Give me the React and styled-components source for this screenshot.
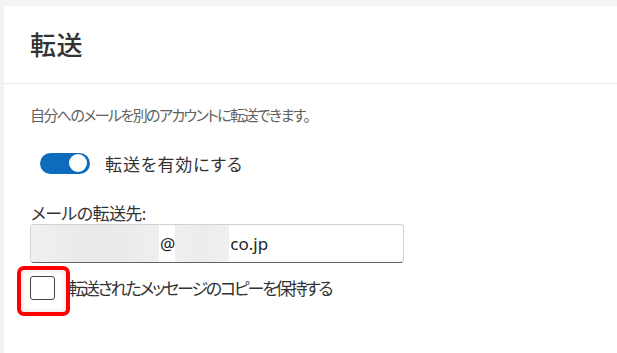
import React from 'react'
import styled, { createGlobalStyle } from 'styled-components'

const GlobalStyle = createGlobalStyle`
    body {
        margin: 0;
        background: #f3f3f3;
        font-family: "Noto Sans", "Noto Sans CJK JP", sans-serif;
        font-feature-settings: "palt";
        color: #242424;
    }
`

function App() {
    return (
        <>
            <GlobalStyle />
            <Panel>
                <Header>
                    <h1>転送</h1>
                </Header>
                <Body>
                    <Description>自分へのメールを別のアカウントに転送できます。</Description>
                    <ToggleRow>
                        <Toggle $on>
                            <span />
                        </Toggle>
                        <Label $spacing={0.9} $drop={3}>転送を有効にする</Label>
                    </ToggleRow>
                    <FieldLabel>メールの転送先:</FieldLabel>
                    <Input>
                        <Blur $w={128} $strong />
                        <span>@</span>
                        <Blur $w={54} />
                        <span>co.jp</span>
                    </Input>
                    <CheckRow>
                        <CheckWrap>
                            <Checkbox />
                            <Highlight />
                        </CheckWrap>
                        <Label $spacing={-2.2} $drop={2}>転送されたメッセージのコピーを保持する</Label>
                    </CheckRow>
                </Body>
            </Panel>
        </>
    )
}

export default App

const Panel = styled.div`
    margin: 6px 0 0 4px;
    background: #ffffff;
    min-height: 347px;
`

const Header = styled.div`
    padding: 22px 26px 21px;
    border-bottom: 1px solid #ebebeb;

    h1 {
        margin: 0;
        font-size: 26px;
        line-height: 34px;
        font-weight: 500;
        color: #333333;
        letter-spacing: 0.5px;
    }
`

const Body = styled.div`
    padding: 21px 26px 0;
`

const Description = styled.p`
    margin: 0;
    font-size: 15px;
    line-height: 20px;
    letter-spacing: -1.6px;
    color: #616161;
`

const ToggleRow = styled.div`
    display: flex;
    align-items: center;
    gap: 15px;
    margin: 27px 0 0 10px;
    height: 22px;
`

const Toggle = styled.div`
    width: 50px;
    height: 21px;
    border-radius: 11px;
    background: ${p => (p.$on ? '#0f6cbd' : '#ffffff')};
    display: flex;
    align-items: center;
    justify-content: ${p => (p.$on ? 'flex-end' : 'flex-start')};
    padding: 0 3px;
    box-sizing: border-box;

    span {
        width: 18px;
        height: 18px;
        border-radius: 50%;
        background: #ffffff;
    }
`

const Label = styled.span`
    font-size: 17px;
    line-height: 22px;
    padding-top: ${p => p.$drop || 0}px;
    letter-spacing: ${p => p.$spacing || 0}px;
    color: #333333;
`

const FieldLabel = styled.div`
    margin: 30px 0 0 1px;
    font-size: 17px;
    line-height: 20px;
    letter-spacing: -0.6px;
    color: #333333;
`

const Input = styled.div`
    width: 374px;
    height: 39px;
    box-sizing: border-box;
    border: 1px solid #d1d1d1;
    border-bottom-color: #616161;
    border-radius: 4px;
    display: flex;
    align-items: center;
    overflow: hidden;
    font-size: 17px;
    color: #242424;

    span {
        line-height: 22px;
    }
`

const Blur = styled.div`
    width: ${p => p.$w}px;
    align-self: stretch;
    margin-right: 1px;
    background: ${p =>
        p.$strong
            ? 'linear-gradient(90deg, #f0f0f0 0%, #e9e9e9 45%, #ebebeb 75%, #efefef 100%)'
            : 'linear-gradient(90deg, #efefef, #ececec 50%, #f0f0f0)'};
`

const CheckRow = styled.div`
    display: flex;
    align-items: center;
    gap: 13px;
    margin-top: 13px;
`

const CheckWrap = styled.div`
    position: relative;
    width: 25px;
    height: 24px;
`

const Checkbox = styled.div`
    width: 25px;
    height: 24px;
    box-sizing: border-box;
    border: 1px solid #424242;
    border-radius: 3px;
    background: #ffffff;
`

const Highlight = styled.div`
    position: absolute;
    left: -13px;
    top: -10px;
    width: 53px;
    height: 50px;
    box-sizing: border-box;
    border: 4px solid #ff0000;
    border-radius: 7px;
    box-shadow: inset 0 0 6px rgba(0, 0, 0, 0.12);
`
